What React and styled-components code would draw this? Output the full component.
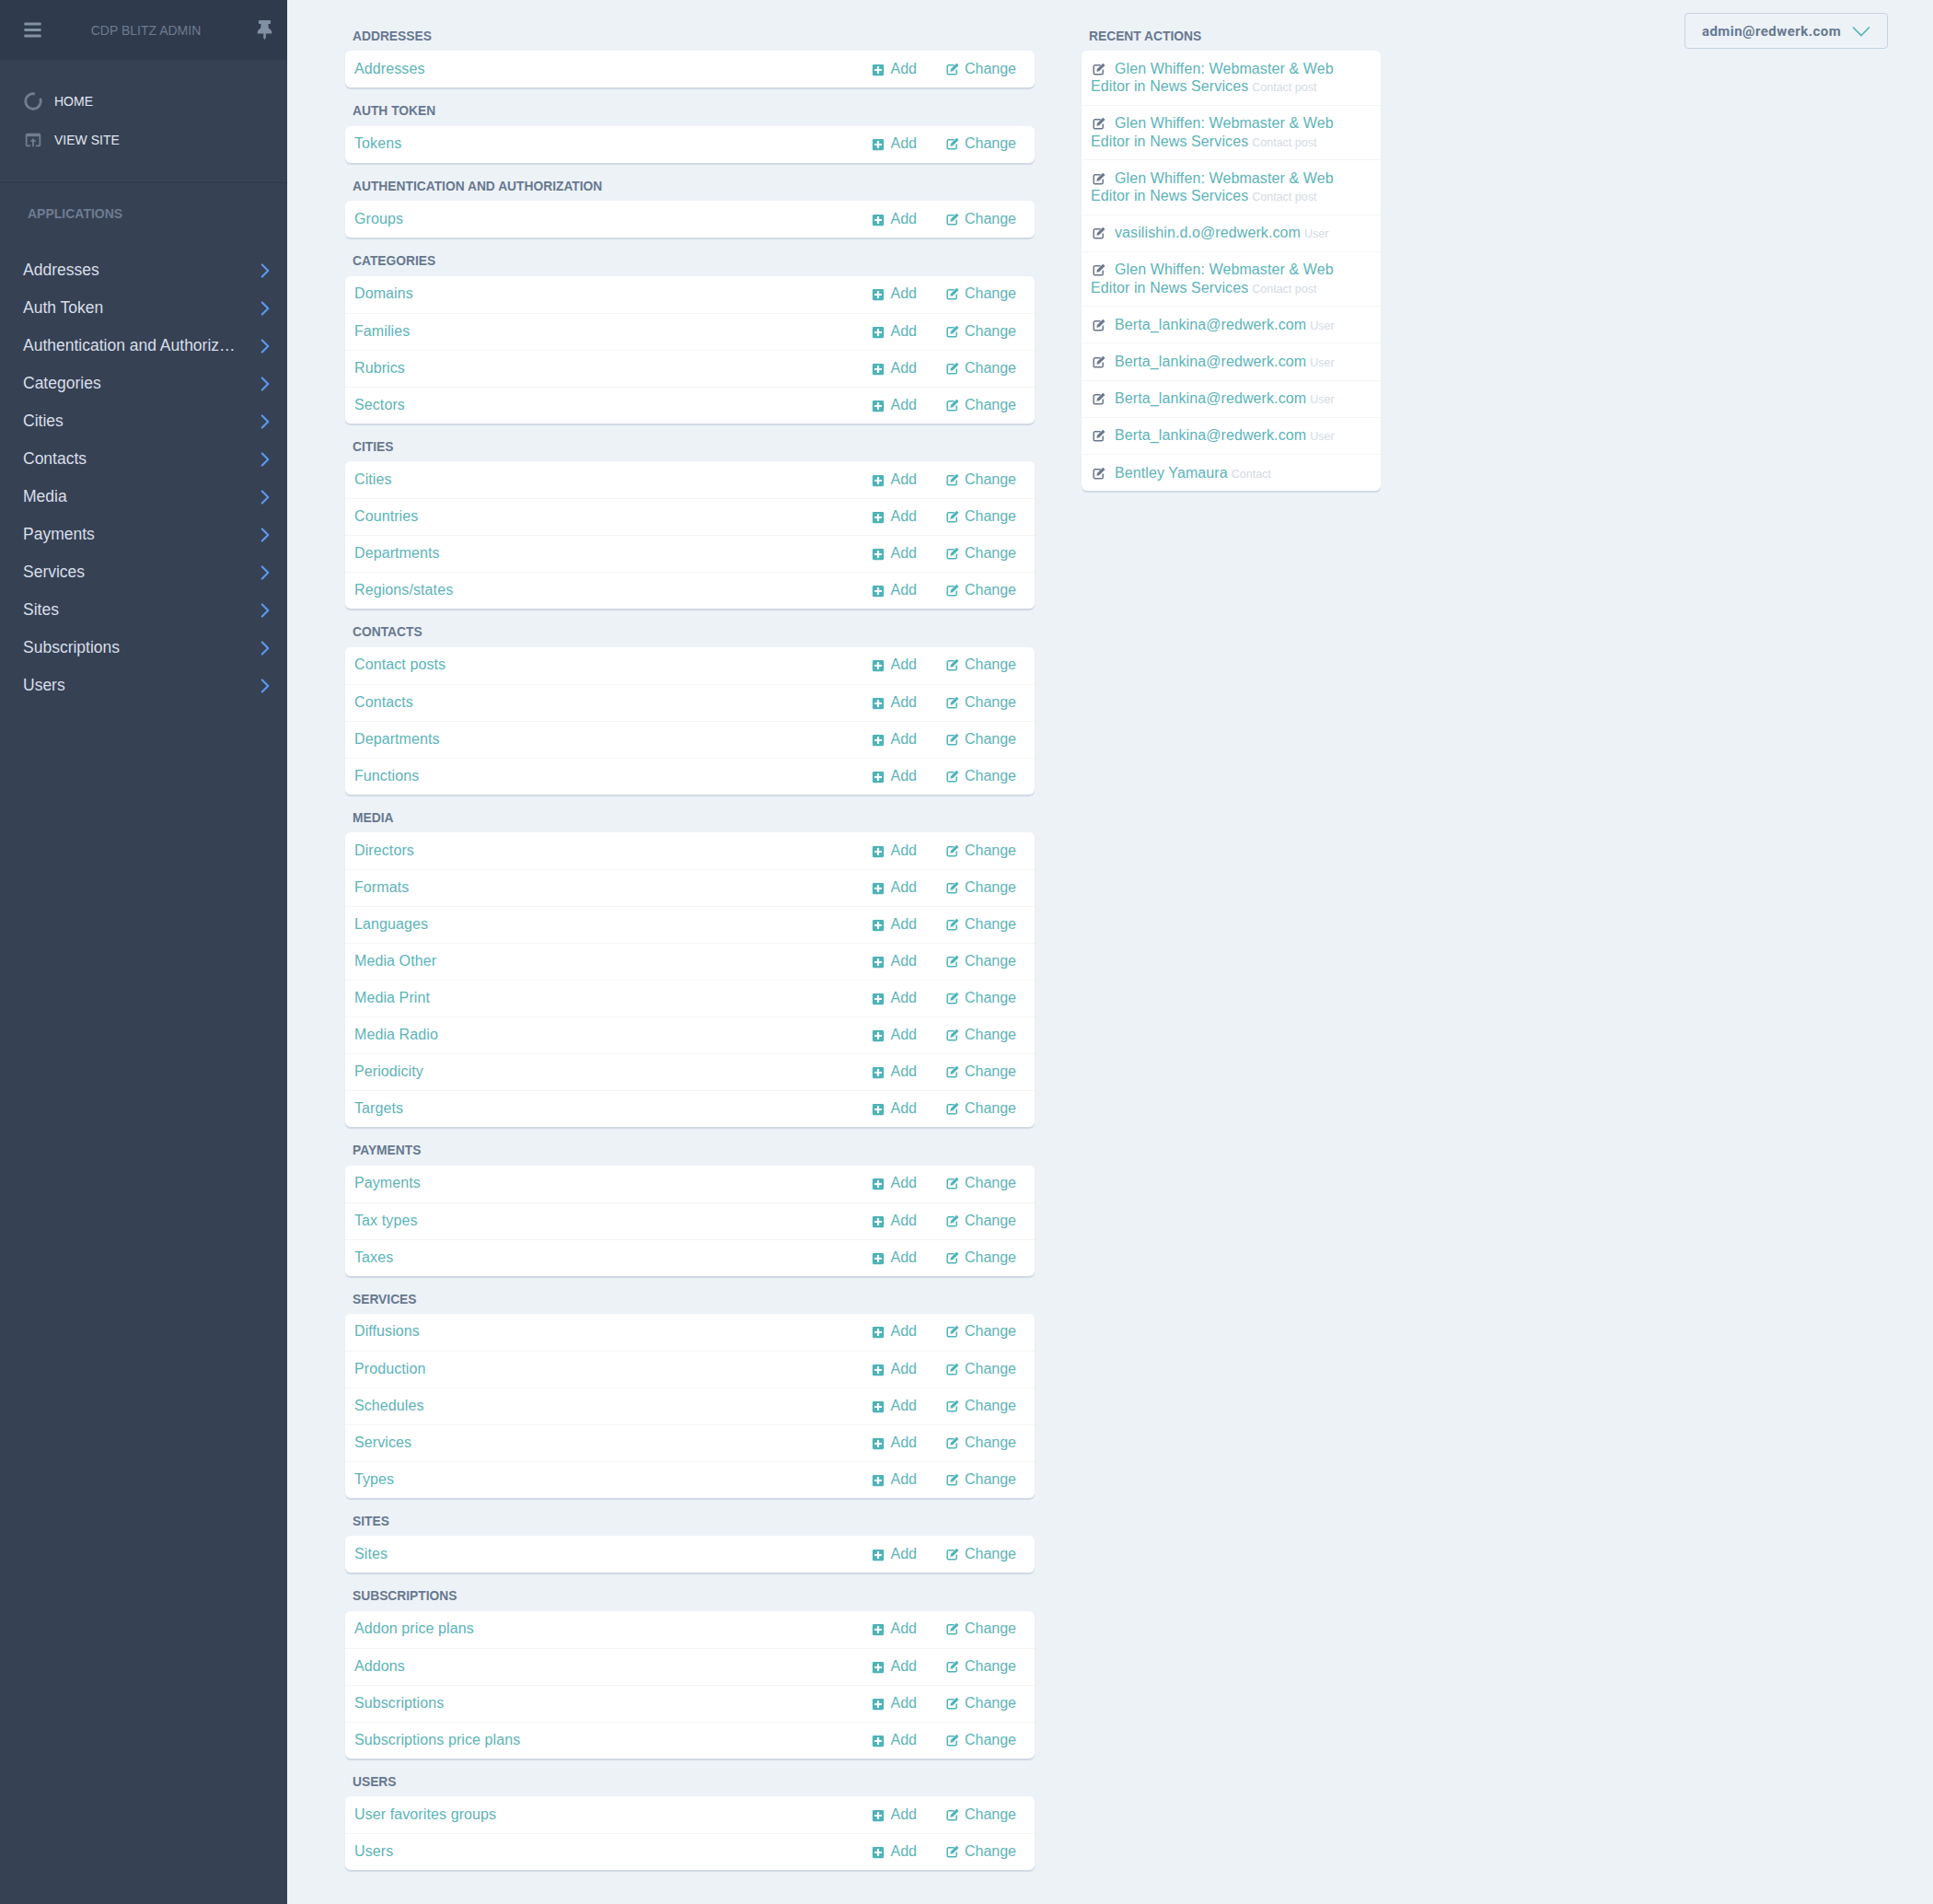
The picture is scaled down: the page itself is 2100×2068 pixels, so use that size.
import React from "react";
import styled, { createGlobalStyle } from "styled-components";
import { FaBars, FaThumbtack, FaPlusSquare } from "react-icons/fa";
import { MdOpenInBrowser } from "react-icons/md";
import { FiChevronRight } from "react-icons/fi";

const GlobalStyle = createGlobalStyle`
  html, body {
    margin: 0;
    padding: 0;
    background: #edf2f7;
    font-family: "Liberation Sans", Arial, sans-serif;
  }
`;

const Page = styled.div`
  display: flex;
  width: 2100px;
  height: 2068px;
  overflow: hidden;
  background: #edf2f7;
`;

const Sidebar = styled.aside`
  width: 312px;
  flex: none;
  background: #364154;
`;

const SideHeader = styled.div`
  height: 65px;
  display: flex;
  align-items: center;
  justify-content: space-between;
  padding: 0 14px 0 25px;
  background: #2f3a4c;
  box-sizing: border-box;
`;

const SiteTitle = styled.div`
  font-size: 14px;
  color: #6d7c92;
  margin-right: 6px;
`;

const SideLinks = styled.div`
  padding: 24px 0 25px 26px;
  border-bottom: 1px solid #2f3a4c;
`;

const SideLink = styled.div`
  height: 42px;
  display: flex;
  align-items: center;
  gap: 13px;
  font-size: 14px;
  color: #e2e8f0;
  svg {
    flex: none;
  }
`;

const SideLabel = styled.div`
  font-size: 14px;
  font-weight: 700;
  color: #6d7c92;
  padding: 25px 0 33px 30px;
  line-height: 16px;
`;

const SideItem = styled.div`
  height: 41px;
  display: flex;
  align-items: center;
  justify-content: space-between;
  padding: 0 11px 0 25px;
  font-size: 17.5px;
  color: #d8dfe9;
`;

const SideItemName = styled.span`
  width: 236px;
  white-space: nowrap;
  overflow: hidden;
  text-overflow: ellipsis;
`;

const Main = styled.main`
  flex: 1;
  display: flex;
  align-items: flex-start;
  padding: 0 49px 0 63px;
`;

const ModuleColumn = styled.div`
  width: 749px;
  flex: none;
  padding-top: 19px;
`;

const RecentColumn = styled.div`
  width: 325px;
  flex: none;
  margin-left: 51px;
  padding-top: 19px;
`;

const SectionTitle = styled.h2`
  margin: 0;
  height: 36.45px;
  padding: 13px 0 0 8px;
  box-sizing: border-box;
  line-height: 16px;
  font-size: 13.8px;
  font-weight: 700;
  color: #677890;
`;

const Card = styled.div`
  background: #fff;
  border-radius: 6px;
  box-shadow: 0 2px 1px #cfd8e3;
  margin-bottom: 5px;
`;

const ModuleRow = styled.div`
  height: 40px;
  box-sizing: border-box;
  display: flex;
  align-items: center;
  padding: 0 20px 1px 10px;
  font-size: 16px;
  color: #5cb4b9;
  & + & {
    border-top: 1px solid #f3f5f8;
  }
`;

const ModuleName = styled.span`
  flex: 1;
  letter-spacing: 0.1px;
`;

const Action = styled.span`
  display: inline-flex;
  align-items: center;
  gap: ${(props) => props.$iconGap}px;
  margin-left: ${(props) => props.$gap || 0}px;
  svg {
    color: #4fb3b9;
    transform: translateY(${(props) => props.$drop || 0}px);
  }
`;

const RecentRow = styled.div`
  padding: 9.5px 10px 10.5px;
  font-size: 16px;
  line-height: 19.2px;
  letter-spacing: 0.1px;
  color: #5cb4b9;
  & + & {
    border-top: 1px solid #f3f5f8;
  }
`;

const RecentIcon = styled.span`
  display: inline-block;
  height: 14px;
  margin: 0 10px 0 2px;
  color: #6b778c;
  line-height: 1;
  vertical-align: -2px;
`;

const RecentType = styled.span`
  font-size: 12.5px;
  line-height: 1;
  letter-spacing: 0;
  color: #d3dae3;
  margin-left: 4px;
`;

const UserButton = styled.button`
  width: 221px;
  height: 39px;
  margin: 14px 0 0 auto;
  flex: none;
  display: flex;
  align-items: center;
  justify-content: space-between;
  padding: 0 18px;
  box-sizing: border-box;
  background: transparent;
  border: 1px solid #c5d4e3;
  border-radius: 4px;
  font-family: Roboto, sans-serif;
  font-size: 15px;
  font-weight: 700;
  letter-spacing: 0.45px;
  color: #677890;
`;

const sideItems = [
  "Addresses",
  "Auth Token",
  "Authentication and Authorization",
  "Categories",
  "Cities",
  "Contacts",
  "Media",
  "Payments",
  "Services",
  "Sites",
  "Subscriptions",
  "Users",
];

const sections = [
  { title: "ADDRESSES", rows: ["Addresses"] },
  { title: "AUTH TOKEN", rows: ["Tokens"] },
  { title: "AUTHENTICATION AND AUTHORIZATION", rows: ["Groups"] },
  { title: "CATEGORIES", rows: ["Domains", "Families", "Rubrics", "Sectors"] },
  { title: "CITIES", rows: ["Cities", "Countries", "Departments", "Regions/states"] },
  { title: "CONTACTS", rows: ["Contact posts", "Contacts", "Departments", "Functions"] },
  {
    title: "MEDIA",
    rows: [
      "Directors",
      "Formats",
      "Languages",
      "Media Other",
      "Media Print",
      "Media Radio",
      "Periodicity",
      "Targets",
    ],
  },
  { title: "PAYMENTS", rows: ["Payments", "Tax types", "Taxes"] },
  { title: "SERVICES", rows: ["Diffusions", "Production", "Schedules", "Services", "Types"] },
  { title: "SITES", rows: ["Sites"] },
  {
    title: "SUBSCRIPTIONS",
    rows: ["Addon price plans", "Addons", "Subscriptions", "Subscriptions price plans"],
  },
  { title: "USERS", rows: ["User favorites groups", "Users"] },
];

const glen = "Glen Whiffen: Webmaster & Web Editor in News Services";
const recent = [
  [glen, "Contact post"],
  [glen, "Contact post"],
  [glen, "Contact post"],
  ["vasilishin.d.o@redwerk.com", "User"],
  [glen, "Contact post"],
  ["Berta_lankina@redwerk.com", "User"],
  ["Berta_lankina@redwerk.com", "User"],
  ["Berta_lankina@redwerk.com", "User"],
  ["Berta_lankina@redwerk.com", "User"],
  ["Bentley Yamaura", "Contact"],
];

const HomeIcon = () => (
  <svg width="20" height="20" viewBox="0 0 20 20" fill="none">
    <path d="M12 2.05A8.2 8.2 0 1 0 17.6 6.9" stroke="#6f7d92" strokeWidth="2.8" />
  </svg>
);

const EditIcon = () => (
  <svg width="14" height="14" viewBox="0 0 14 14">
    <path
      d="M8.6 2.8H2.6A1.4 1.4 0 0 0 1.2 4.2v7.2a1.4 1.4 0 0 0 1.4 1.4h7.2a1.4 1.4 0 0 0 1.4-1.4V7.6"
      fill="none"
      stroke="currentColor"
      strokeWidth="1.5"
    />
    <path d="M4.4 9.8l.5-2.7L11.3.7l2.2 2.2-6.4 6.4z" fill="currentColor" />
  </svg>
);

const ExpandIcon = () => (
  <svg width="20" height="12" viewBox="0 0 20 12" fill="none">
    <path d="M1 1.5l9 9 9-9" stroke="#55b5b5" strokeWidth="1.7" />
  </svg>
);

const App = () => (
  <Page>
    <GlobalStyle />
    <Sidebar>
      <SideHeader>
        <FaBars size={21} color="#8190a5" />
        <SiteTitle>CDP BLITZ ADMIN</SiteTitle>
        <FaThumbtack size={21} color="#8190a5" />
      </SideHeader>
      <SideLinks>
        <SideLink>
          <HomeIcon />
          HOME
        </SideLink>
        <SideLink>
          <MdOpenInBrowser size={22} color="#6f7d92" style={{ margin: "0 -1px" }} />
          VIEW SITE
        </SideLink>
      </SideLinks>
      <SideLabel>APPLICATIONS</SideLabel>
      {sideItems.map((item) => (
        <SideItem key={item}>
          <SideItemName>{item}</SideItemName>
          <FiChevronRight size={26} color="#5f97ee" />
        </SideItem>
      ))}
    </Sidebar>
    <Main>
      <ModuleColumn>
        {sections.map((section) => (
          <section key={section.title}>
            <SectionTitle>{section.title}</SectionTitle>
            <Card>
              {section.rows.map((row) => (
                <ModuleRow key={row}>
                  <ModuleName>{row}</ModuleName>
                  <Action $iconGap={6} $drop={1}>
                    <FaPlusSquare size={14} />
                    Add
                  </Action>
                  <Action $gap={32} $iconGap={6}>
                    <EditIcon />
                    Change
                  </Action>
                </ModuleRow>
              ))}
            </Card>
          </section>
        ))}
      </ModuleColumn>
      <RecentColumn>
        <SectionTitle>RECENT ACTIONS</SectionTitle>
        <Card>
          {recent.map(([name, type], i) => (
            <RecentRow key={i}>
              <RecentIcon>
                <EditIcon />
              </RecentIcon>
              {name}
              <RecentType>{type}</RecentType>
            </RecentRow>
          ))}
        </Card>
      </RecentColumn>
      <UserButton>
        admin@redwerk.com
        <ExpandIcon />
      </UserButton>
    </Main>
  </Page>
);

export default App;
